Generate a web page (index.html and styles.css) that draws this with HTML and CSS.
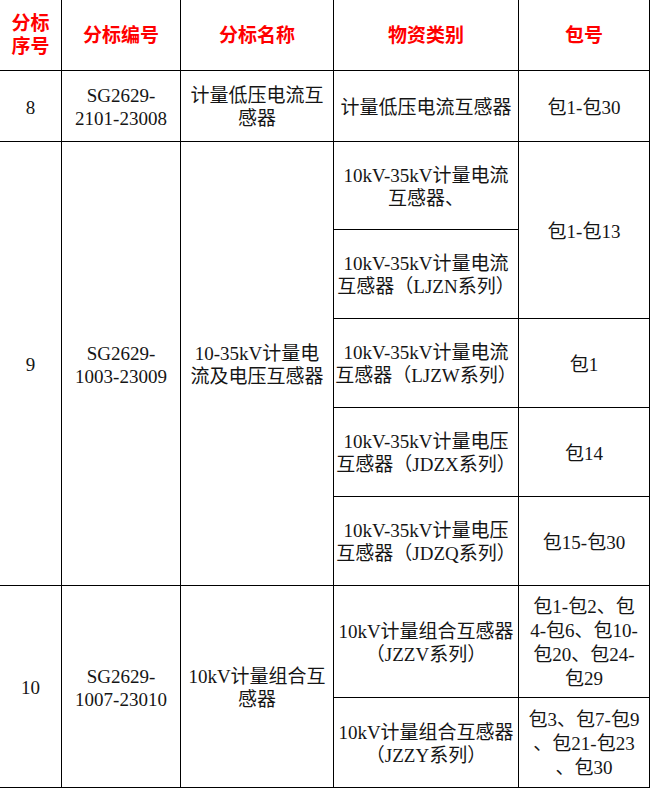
FILE: index.html
```html
<!DOCTYPE html>
<html lang="zh-CN">
<head>
<meta charset="utf-8">
<title>分标表</title>
<link rel="stylesheet" href="styles.css">
</head>
<body>
<div class="grid">
  <div class="cell head c1 r1">分标<br>序号</div>
  <div class="cell head c2 r1">分标编号</div>
  <div class="cell head c3 r1">分标名称</div>
  <div class="cell head c4 r1">物资类别</div>
  <div class="cell head c5 r1">包号</div>

  <div class="cell c1 r2">8</div>
  <div class="cell c2 r2">SG2629-<br>2101-23008</div>
  <div class="cell c3 r2">计量低压电流互<br>感器</div>
  <div class="cell c4 r2">计量低压电流互感器</div>
  <div class="cell c5 r2">包1-包30</div>

  <div class="cell c1 span9">9</div>
  <div class="cell c2 span9">SG2629-<br>1003-23009</div>
  <div class="cell c3 span9">10-35kV计量电<br>流及电压互感器</div>
  <div class="cell c4 r3">10kV-35kV计量电流<br>互感器、</div>
  <div class="cell c5 span13">包1-包13</div>
  <div class="cell c4 r4">10kV-35kV计量电流<br>互感器（LJZN系列）</div>
  <div class="cell c4 r5">10kV-35kV计量电流<br>互感器（LJZW系列）</div>
  <div class="cell c5 r5">包1</div>
  <div class="cell c4 r6">10kV-35kV计量电压<br>互感器（JDZX系列）</div>
  <div class="cell c5 r6">包14</div>
  <div class="cell c4 r7">10kV-35kV计量电压<br>互感器（JDZQ系列）</div>
  <div class="cell c5 r7">包15-包30</div>

  <div class="cell c1 span10">10</div>
  <div class="cell c2 span10">SG2629-<br>1007-23010</div>
  <div class="cell c3 span10">10kV计量组合互<br>感器</div>
  <div class="cell c4 r8">10kV计量组合互感器<br>（JZZV系列）</div>
  <div class="cell c5 r8 tall">包1-包2、包<br>4-包6、包10-<br>包20、包24-<br>包29</div>
  <div class="cell c4 r9">10kV计量组合互感器<br>（JZZY系列）</div>
  <div class="cell c5 r9 tall">包3、包7-包9<br>、包21-包23<br>、包30</div>
</div>
</body>
</html>
```

FILE: styles.css
```css
html, body {
  margin: 0;
  padding: 0;
  background: #ffffff;
}

body {
  overflow: hidden;
}

.grid {
  display: grid;
  grid-template-columns: 61px 118px 152px 184px 130px;
  grid-template-rows: 70px 70px 87px 88px 88px 88px 88px 111px 89px;
  gap: 1px;
  background: #000000;
  border: 1px solid #000000;
  margin: -1px 0 0 -1px;
  width: max-content;
}

.cell {
  background: #ffffff;
  display: flex;
  align-items: center;
  justify-content: center;
  text-align: center;
  white-space: nowrap;
  font-family: "Liberation Serif", "Noto Sans CJK SC", serif;
  font-size: 19px;
  line-height: 23px;
  color: #151515;
  padding-top: 2px;
  box-sizing: border-box;
}

.tall {
  line-height: 24px;
}

.head {
  font-family: "Liberation Serif", "Noto Sans CJK SC", sans-serif;
  font-weight: 700;
  color: #ff0000;
  padding-top: 0;
}

.c1 { grid-column: 1; }
.c2 { grid-column: 2; }
.c3 { grid-column: 3; }
.c4 { grid-column: 4; }
.c5 { grid-column: 5; }

.r1 { grid-row: 1; }
.r2 { grid-row: 2; }
.r3 { grid-row: 3; }
.r4 { grid-row: 4; }
.r5 { grid-row: 5; }
.r6 { grid-row: 6; }
.r7 { grid-row: 7; }
.r8 { grid-row: 8; }
.r9 { grid-row: 9; }

.span9 { grid-row: 3 / 8; }
.span13 { grid-row: 3 / 5; }
.span10 { grid-row: 8 / 10; }
```
